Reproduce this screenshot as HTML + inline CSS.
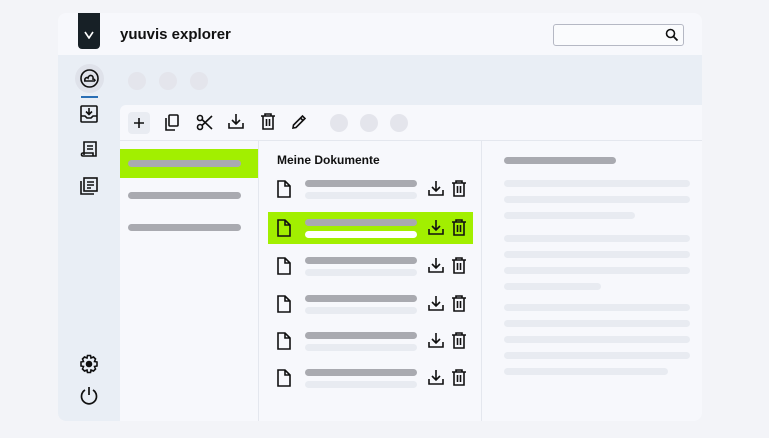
<!DOCTYPE html>
<html><head><style>
*{margin:0;padding:0;box-sizing:border-box}
body{width:769px;height:438px;background:#f3f4f8;font-family:"Liberation Sans",sans-serif;position:relative;overflow:hidden}
.a{position:absolute}
.bar{position:absolute;height:7px;border-radius:4px;background:#a9aab0}
.lb{position:absolute;height:7px;border-radius:4px;background:#e8ebf1}
.dot{position:absolute;width:18px;height:18px;border-radius:50%;background:#e4e5ec}
svg{position:absolute}
</style></head><body>
<div class="a" style="left:58px;top:13px;width:644px;height:408px;border-radius:8px;background:#f7f8fc;overflow:hidden">
<div class="a" style="left:0;top:42px;width:644px;height:366px;background:#e9eef5"></div>
<div class="a" style="left:62px;top:92px;width:582px;height:316px;background:#f7f8fc;border-top-left-radius:6px"></div>
</div>
<div class="a" style="left:78px;top:13px;width:22px;height:36px;background:#172026;border-radius:0 0 4px 4px"></div>
<svg style="left:84px;top:31px" width="10" height="8" viewBox="0 0 10 8"><path d="M1 1 L5 7 L9 1" stroke="#fff" stroke-width="1.6" fill="none"/></svg>
<div class="a" style="left:120px;top:26px;font-weight:bold;font-size:15px;color:#111">yuuvis explorer</div>
<div class="a" style="left:553px;top:24px;width:131px;height:22px;border:1px solid #b5b8c4;border-radius:3px;background:#fafbfd"></div>
<svg style="left:665px;top:28px" width="14" height="14" viewBox="0 0 14 14"><circle cx="5.5" cy="5.5" r="4" stroke="#111" stroke-width="1.6" fill="none"/><path d="M8.5 8.5 L12.5 12.5" stroke="#111" stroke-width="1.8"/></svg>
<div class="a" style="left:75px;top:64px;width:29px;height:29px;border-radius:50%;background:#dfe2ea"></div>
<svg style="left:79px;top:68px" width="21" height="21" viewBox="0 0 21 21" fill="none" stroke="#111" stroke-width="1.6"><circle cx="10.5" cy="10.5" r="8.5"/><path d="M5 13 H16 M6 13 C5 10 8 9 9 10 C10 6 15 7 14 11 C16 11 16 13 16 13"/></svg>
<div class="a" style="left:81px;top:96px;width:17px;height:2px;background:#2a6fb5"></div>
<svg style="left:79px;top:104px" width="20" height="20" viewBox="0 0 20 20" fill="none" stroke="#111" stroke-width="1.6"><rect x="2" y="2" width="16" height="16" rx="1"/><path d="M2 12 H6 L8 14 H12 L14 12 H18 M10 4 V10 M7 7.5 L10 10.5 L13 7.5"/></svg>
<svg style="left:79px;top:140px" width="20" height="20" viewBox="0 0 20 20" fill="none" stroke="#111" stroke-width="1.6"><path d="M5 15 V2 H17 V16 H4 C2 16 2 13 4 13 H14 V16 M8 6 H14 M8 9 H14"/></svg>
<svg style="left:78px;top:176px" width="21" height="21" viewBox="0 0 21 21" fill="none" stroke="#111" stroke-width="1.6"><rect x="6" y="2" width="13" height="13"/><path d="M3 5 V18 H16 M9 6 H16 M9 9 H16 M9 12 H13"/></svg>
<svg style="left:79px;top:354px" width="20" height="20" viewBox="0 0 20 20" fill="none" stroke="#111" stroke-width="1.6"><path d="M8.5 1.5 H11.5 L12 4 L14.5 3 L16.5 5 L15.5 7.5 L18 8 V12 L15.5 12.5 L16.5 15 L14.5 17 L12 16 L11.5 18.5 H8.5 L8 16 L5.5 17 L3.5 15 L4.5 12.5 L2 12 V8 L4.5 7.5 L3.5 5 L5.5 3 L8 4 Z"/><circle cx="10" cy="10" r="2.5" fill="#111"/></svg>
<svg style="left:79px;top:386px" width="20" height="21" viewBox="0 0 20 21" fill="none" stroke="#111" stroke-width="1.7"><path d="M10 1 V9 M6 4 A7.5 7.5 0 1 0 14 4"/></svg>
<div class="dot" style="left:128px;top:72px"></div><div class="dot" style="left:159px;top:72px"></div><div class="dot" style="left:190px;top:72px"></div>
<div class="a" style="left:120px;top:140px;width:582px;height:1px;background:#e4e7ee"></div>
<div class="a" style="left:128px;top:112px;width:22px;height:22px;border-radius:4px;background:#e9ecf2"></div>
<svg style="left:132px;top:116px" width="14" height="14" viewBox="0 0 14 14" stroke="#111" stroke-width="1.6"><path d="M7 2 V12 M2 7 H12"/></svg>
<svg style="left:163px;top:113px" width="18" height="19" viewBox="0 0 18 19" fill="none" stroke="#111" stroke-width="1.6"><rect x="6" y="2" width="9" height="11" rx="1"/><path d="M3 5 V17 H12"/></svg>
<svg style="left:196px;top:113px" width="18" height="19" viewBox="0 0 18 19" fill="none" stroke="#111" stroke-width="1.6"><circle cx="4" cy="5" r="2.5"/><circle cx="4" cy="14" r="2.5"/><path d="M6 6.5 L16 16 M6 12.5 L16 3"/></svg>
<svg style="left:227px;top:112px" width="18" height="19" viewBox="0 0 18 19" fill="none" stroke="#111" stroke-width="1.6"><path d="M2 11 V16 H16 V11 M9 2 V12 M5 8 L9 12 L13 8"/></svg>
<svg style="left:259px;top:112px" width="18" height="19" viewBox="0 0 18 19" fill="none" stroke="#111" stroke-width="1.6"><path d="M2 4 H16 M6 4 V2 H12 V4 M4 4 V17 H14 V4 M7.5 7 V14 M10.5 7 V14"/></svg>
<svg style="left:290px;top:113px" width="18" height="18" viewBox="0 0 18 18" fill="none" stroke="#111" stroke-width="1.6"><path d="M3 15 L3.5 12 L12.5 3 L15 5.5 L6 14.5 Z M10.5 5 L13 7.5"/></svg>
<div class="dot" style="left:330px;top:114px"></div><div class="dot" style="left:360px;top:114px"></div><div class="dot" style="left:390px;top:114px"></div>
<div class="a" style="left:258px;top:141px;width:1px;height:280px;background:#e4e7ee"></div>
<div class="a" style="left:481px;top:141px;width:1px;height:280px;background:#e4e7ee"></div>
<div class="a" style="left:120px;top:149px;width:138px;height:29px;background:#a2ef00"></div>
<div class="bar" style="left:128px;top:160px;width:113px"></div>
<div class="bar" style="left:128px;top:192px;width:113px"></div>
<div class="bar" style="left:128px;top:224px;width:113px"></div>
<div class="a" style="left:277px;top:153px;font-weight:bold;font-size:12px;color:#111">Meine Dokumente</div>
<div class="a" style="left:268px;top:212px;width:205px;height:32px;background:#a2ef00"></div>
<div id="rows"></div>
<div class="bar" style="left:504px;top:157px;width:112px"></div>
<div class="lb" style="left:504px;top:180px;width:186px"></div>
<div class="lb" style="left:504px;top:196px;width:186px"></div>
<div class="lb" style="left:504px;top:212px;width:131px"></div>
<div class="lb" style="left:504px;top:235px;width:186px"></div>
<div class="lb" style="left:504px;top:251px;width:186px"></div>
<div class="lb" style="left:504px;top:267px;width:186px"></div>
<div class="lb" style="left:504px;top:283px;width:97px"></div>
<div class="lb" style="left:504px;top:304px;width:186px"></div>
<div class="lb" style="left:504px;top:320px;width:186px"></div>
<div class="lb" style="left:504px;top:336px;width:186px"></div>
<div class="lb" style="left:504px;top:352px;width:186px"></div>
<div class="lb" style="left:504px;top:368px;width:164px"></div>
<script>
var ys=[189,228,266,304,341,378],h='';
ys.forEach(function(y,i){
h+='<svg style="left:276px;top:'+(y-10)+'px" width="16" height="20" viewBox="0 0 16 20" fill="none" stroke="#111" stroke-width="1.6"><path d="M2 2 H9 L14 7 V18 H2 Z M9 2 V7 H14"/></svg>';
h+='<div class="bar" style="left:305px;top:'+(y-9)+'px;width:112px"></div>';
h+='<div class="lb" style="left:305px;top:'+(y+3)+'px;width:112px;'+(i==1?'background:#fff':'')+'"></div>';
h+='<svg style="left:427px;top:'+(y-10)+'px" width="18" height="19" viewBox="0 0 18 19" fill="none" stroke="#111" stroke-width="1.6"><path d="M2 11 V16 H16 V11 M9 2 V12 M5 8 L9 12 L13 8"/></svg>';
h+='<svg style="left:450px;top:'+(y-10)+'px" width="18" height="19" viewBox="0 0 18 19" fill="none" stroke="#111" stroke-width="1.6"><path d="M2 4 H16 M6 4 V2 H12 V4 M4 4 V17 H14 V4 M7.5 7 V14 M10.5 7 V14"/></svg>';
});
document.getElementById('rows').outerHTML=h;
</script>
</body></html>
